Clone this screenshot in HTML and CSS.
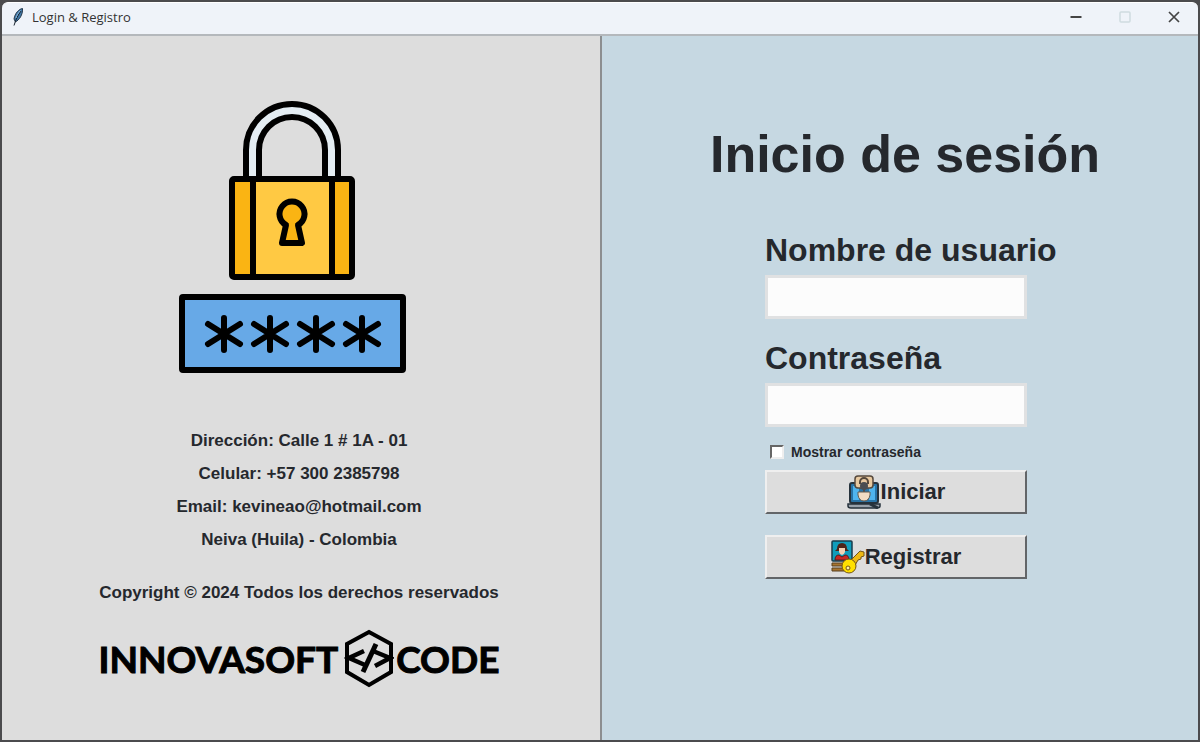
FILE: index.html
```html
<!DOCTYPE html>
<html lang="es">
<head>
  <meta charset="UTF-8">
  <meta name="viewport" content="width=device-width, initial-scale=1.0">
  <title>Login &amp; Registro</title>
  <link rel="stylesheet" href="styles.css">
</head>
<body>
  <div class="window">
    <header class="titlebar">
      <svg class="feather" viewBox="0 0 12 18" aria-hidden="true">
        <path d="M10.500 0.500C7 1 3 5 2 11L3.500 14C7 12 11 7 10.500 0.500Z" fill="#3f78a8" stroke="#26384a"/>
        <path d="M9 3C6 7 4 11 2 17.500" fill="none" stroke="#16222e"/>
        <path d="M8.500 2.500C6 5 4.500 8 4 10" fill="none" stroke="#8fb8d8"/>
      </svg>
      <span class="title">Login &amp; Registro</span>
      <div class="controls">
        <button type="button" aria-label="Minimizar">
          <svg viewBox="0 0 12 12"><path d="M0.500 6H11.500" stroke="#444" stroke-width="2"/></svg>
        </button>
        <button type="button" aria-label="Maximizar" disabled>
          <svg viewBox="0 0 12 12"><rect x="1" y="1" width="10" height="10" rx="1" fill="none" stroke="#cfdce0" stroke-width="1.500"/></svg>
        </button>
        <button type="button" aria-label="Cerrar">
          <svg viewBox="0 0 12 12"><path d="M1 1L11 11M11 1L1 11" stroke="#444" stroke-width="1.700"/></svg>
        </button>
      </div>
    </header>

    <main class="panels">
      <section class="panel info">
        <svg class="padlock" viewBox="0 0 228 274" aria-hidden="true">
          <g stroke="#000" stroke-width="6" stroke-linejoin="round" stroke-linecap="round">
            <path d="M67 79V50a46 46 0 0 1 92 0V79H146V50a33 33 0 0 0-66 0V79Z" fill="#e4edf3"/>
            <rect x="53" y="79" width="120" height="98" rx="2" fill="#fab413"/>
            <rect x="74" y="79" width="79" height="98" fill="#ffc943"/>
            <path d="M107 125A12.500 12.500 0 1 1 119 125L123 143H103Z" fill="#fab413"/>
            <rect x="3" y="197" width="221" height="73" rx="1" fill="#67a9e7"/>
            <path d="M45 218V250M29 224L61 244M61 224L29 244"/>
            <path d="M91 218V250M75 224L107 244M107 224L75 244"/>
            <path d="M137 218V250M121 224L153 244M153 224L121 244"/>
            <path d="M183 218V250M167 224L199 244M199 224L167 244"/>
          </g>
        </svg>

        <address class="contact">
          <p>Dirección: Calle 1 # 1A - 01</p>
          <p>Celular: +57 300 2385798</p>
          <p>Email: kevineao@hotmail.com</p>
          <p>Neiva (Huila) - Colombia</p>
        </address>
        <p class="copyright">Copyright © 2024 Todos los derechos reservados</p>

        <div class="brand">
          <span>INNOVASOFT</span>
          <svg viewBox="0 0 50 60" aria-hidden="true">
            <g fill="none" stroke="#000" stroke-width="4">
              <path d="M25 3L47 15V43L25 56L3 43V15Z"/>
              <path d="M20 22L5 29L21 36" stroke-width="4.500"/>
              <path d="M32 15L19 43" stroke-width="5"/>
              <path d="M29 22L46 29L31 37" stroke-width="4.500"/>
            </g>
          </svg>
          <span>CODE</span>
        </div>
      </section>

      <section class="panel login">
        <h1>Inicio de sesión</h1>
        <form class="login-form">
          <div class="form-group">
            <label class="field-label" for="usuario">Nombre de usuario</label>
            <input class="field" type="text" id="usuario">
          </div>

          <div class="form-group">
            <label class="field-label" for="contrasena">Contraseña</label>
            <input class="field" type="password" id="contrasena">
            <div class="show-password">
              <input type="checkbox" id="mostrar">
              <label for="mostrar">Mostrar contraseña</label>
            </div>
          </div>

          <div class="buttons">
            <button class="btn" type="button">
              <svg viewBox="0 0 34 34" aria-hidden="true">
                <rect x="3" y="8" width="28" height="20" rx="2" fill="#2874a8" stroke="#26323c" stroke-width="2"/>
                <path d="M6 11H12V25H6ZM22 11H28V25H22Z" fill="#4fb4ee"/>
                <rect x="8" y="1" width="18" height="12" rx="3" fill="#e8c9a0" stroke="#55483c" stroke-width="1.500"/>
                <path d="M13 9V7a4 4 0 0 1 8 0V9" fill="none" stroke="#55483c" stroke-width="2"/>
                <circle cx="17" cy="11" r="4" fill="#4a4d51"/>
                <path d="M16 13H18V17H16Z" fill="#4a4d51"/>
                <path d="M11 17H23V20Q22 26 17 26Q12 26 11 20Z" fill="#f1dcc4" stroke="#605a50"/>
                <path d="M1 29H33V31Q33 33 30 33H4Q1 33 1 31Z" fill="#98a1ab" stroke="#26323c" stroke-width="1.500"/>
                <path d="M23 29L31 33" stroke="#26323c" stroke-width="3"/>
              </svg>
              <span>Iniciar</span>
            </button>

            <button class="btn" type="button">
              <svg viewBox="0 0 34 34" aria-hidden="true">
                <rect x="1" y="1" width="20" height="20" rx="1" fill="#109dbb" stroke="#193c4c" stroke-width="1.500"/>
                <path d="M6 9Q6 3 11 3Q16 3 16 9L18 11H4Z" fill="#4c2419"/>
                <path d="M8 8H14V12Q13 15 11 15Q9 15 8 12Z" fill="#f2d1b4"/>
                <path d="M4 20Q4 15 8 15L11 17L14 15Q18 15 18 20Z" fill="#c92822" stroke="#5b1c1b"/>
                <path d="M1 23H14V26H1ZM1 28H13V31H1Z" fill="#a8752f" stroke="#59401f"/>
                <path d="M18 22L29 11L33 12V16L30 17V19L27 20L23 27Z" fill="#edb914" stroke="#705418"/>
                <circle cx="18" cy="26" r="7" fill="#ffe000" stroke="#705418"/>
                <circle cx="17" cy="28" r="2" fill="#fff2a0" stroke="#705418"/>
              </svg>
              <span>Registrar</span>
            </button>
          </div>
        </form>
      </section>
    </main>
  </div>
</body>
</html>
```
FILE: styles.css
```css
* {
  box-sizing: border-box;
}

body {
  margin: 0;
  background-color: #4b4b4d;
  color: #25282d;
  font-family: "Liberation Sans", Arial, sans-serif;
  font-weight: bold;
}

.window {
  display: flex;
  flex-direction: column;
  min-height: 100vh;
  padding: 2px;
}

.titlebar {
  display: flex;
  align-items: center;
  height: 34px;
  padding: 0 0 3px 10px;
  background-color: #eff3f9;
  border-top: 1px solid #fff;
  border-bottom: 2px solid #b4b8bc;
  border-radius: 6px 6px 0 0;
}

.feather {
  width: 12px;
  height: 18px;
  margin-right: 8px;
}

.title {
  flex: 1;
  color: #333;
  font-family: "Open Sans", sans-serif;
  font-size: 13px;
  font-weight: normal;
}

.controls {
  display: flex;
}

.controls button {
  display: flex;
  align-items: center;
  justify-content: center;
  width: 49px;
  height: 28px;
  padding: 0;
  background: none;
  border: none;
}

.controls svg {
  width: 12px;
  height: 12px;
}

.panels {
  display: flex;
  flex: 1;
}

.panel {
  width: 50%;
}

.info {
  display: flex;
  flex-direction: column;
  align-items: center;
  padding: 64px 4px 20px 0;
  background-color: #ddd;
}

.padlock {
  width: 228px;
  height: 274px;
  margin-right: 12px;
}

.contact {
  margin-top: 50px;
  font-size: 17px;
  font-style: normal;
  line-height: 33px;
  text-align: center;
}

.contact p,
.copyright {
  margin: 0;
}

.copyright {
  margin-top: 20px;
  font-size: 17px;
  line-height: 33px;
}

.brand {
  display: flex;
  align-items: center;
  margin-top: 20px;
  color: #000;
  font-family: Lato, sans-serif;
  font-size: 37px;
  line-height: 44px;
  -webkit-text-stroke: 1px #000;
}

.brand svg {
  width: 50px;
  height: 60px;
  margin: 0 2px 0 6px;
}

.login {
  padding: 88px 0 20px;
  background-color: #c6d8e2;
  border-left: 2px solid #8c8e90;
}

h1 {
  margin: 0 0 48px;
  padding-left: 10px;
  font-size: 52px;
  line-height: 60px;
  text-align: center;
}

.login-form {
  width: 262px;
  margin-left: 163px;
}

.form-group {
  margin-bottom: 21px;
}

.form-group:nth-child(2) {
  margin-bottom: 9px;
}

.field-label {
  display: block;
  font-size: 32px;
  line-height: 36px;
  white-space: nowrap;
}

.field {
  display: block;
  width: 100%;
  height: 44px;
  margin-top: 7px;
  padding: 4px 8px;
  background-color: #fcfcfc;
  border: 3px solid #e0e1e2;
  font: inherit;
  font-size: 22px;
}

.show-password {
  display: flex;
  align-items: center;
  height: 18px;
  margin-top: 16px;
  padding-left: 5px;
  font-size: 14px;
}

.show-password input {
  appearance: none;
  width: 14px;
  height: 14px;
  margin: 0 7px 0 0;
  background-color: #fff;
  border: 2px solid;
  border-color: #666 #eee #eee #666;
}

.show-password input:checked {
  background-color: #25282d;
}

.buttons {
  display: flex;
  flex-direction: column;
  gap: 21px;
}

.btn {
  display: flex;
  align-items: center;
  justify-content: center;
  height: 44px;
  padding: 0;
  background-color: #ddd;
  border: 2px solid;
  border-color: #efefef #626568 #626568 #efefef;
  color: inherit;
  font: inherit;
  font-size: 22px;
}

.btn svg {
  width: 34px;
  height: 34px;
}
```
